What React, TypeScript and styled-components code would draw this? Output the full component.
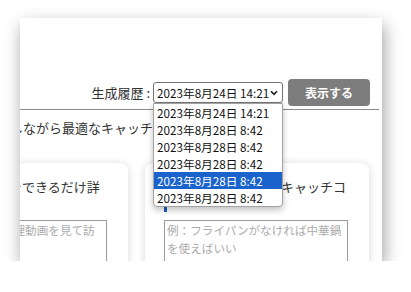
import React from 'react'
import styled, { createGlobalStyle } from 'styled-components'

const GlobalStyle = createGlobalStyle`
  body {
    margin: 0;
    background: #ffffff;
    font-family: "Noto Sans CJK JP", "Noto Sans", sans-serif;
    color: #333333;
  }
`

const Stage = styled.div`
  padding: 18px 0 0 20px;
`

const Panel = styled.div`
  width: 362px;
  height: 243px;
  overflow: hidden;
  background: #ffffff;
  box-shadow: 2px 7px 16px rgba(0, 0, 0, 0.38);
`

const Header = styled.div`
  padding-top: 61px;
`

const Toolbar = styled.div`
  display: flex;
  justify-content: flex-end;
  align-items: center;
  height: 27px;
  padding-right: 12px;
`

const Label = styled.span`
  font-size: 13px;
  color: #333333;
  margin-right: 3px;
  white-space: nowrap;
`

const SelectWrap = styled.div`
  position: relative;
`

const SelectBox = styled.div`
  box-sizing: border-box;
  width: 130px;
  height: 21px;
  border: 1px solid #767676;
  border-radius: 3px;
  display: flex;
  align-items: center;
  justify-content: space-between;
  padding: 0 4px 0 3px;
  font-size: 11.7px;
  color: #111111;
  white-space: nowrap;
`

const Dropdown = styled.ul`
  position: absolute;
  top: 100%;
  left: 0;
  z-index: 10;
  box-sizing: border-box;
  width: 130px;
  margin: 0;
  padding: 0;
  list-style: none;
  background: #ffffff;
  border: 1px solid #a3a3a3;
  border-radius: 0 0 4px 4px;
  box-shadow: 0 3px 6px rgba(0, 0, 0, 0.25);
  overflow: hidden;
`

const Option = styled.li<{ $selected?: boolean }>`
  height: 17px;
  line-height: 17px;
  padding-left: 3px;
  font-size: 11.7px;
  white-space: nowrap;
  color: ${(p) => (p.$selected ? '#ffffff' : '#111111')};
  background: ${(p) => (p.$selected ? '#1a62cc' : 'transparent')};
`

const ShowButton = styled.button`
  margin-left: 5px;
  width: 82px;
  height: 27px;
  border: none;
  border-radius: 4px;
  background: #7d7d7d;
  color: #ffffff;
  font-family: inherit;
  font-size: 12px;
  font-weight: 700;
`

const Divider = styled.div`
  margin: 3px 3px 0 0;
  border-top: 1.5px solid #8a8a8a;
`

const Intro = styled.p`
  margin: 9px 0 0 -88px;
  font-size: 13px;
  line-height: 18px;
  white-space: nowrap;
  color: #333333;
`

const CardRow = styled.div`
  display: flex;
  gap: 17px;
  margin: 26px 0 0 -121px;
`

const Card = styled.section<{ $width: number }>`
  box-sizing: border-box;
  flex-shrink: 0;
  width: ${(p) => p.$width}px;
  height: 200px;
  padding: 15px 21px 0 19px;
  background: #ffffff;
  border-radius: 8px;
  box-shadow: 0 1px 8px rgba(0, 0, 0, 0.16);
`

const CardTitle = styled.h3`
  margin: 0;
  width: 182px;
  font-size: 13px;
  font-weight: 400;
  line-height: 18px;
  white-space: nowrap;
  overflow: hidden;
  color: #333333;
`

const Marker = styled.div`
  width: 3px;
  height: 14px;
  margin: 2px 0 8px;
  background: #1c5fb8;
`

const Answer = styled.textarea`
  display: block;
  box-sizing: border-box;
  width: 100%;
  height: 60px;
  margin: 0;
  padding: 0 2px;
  border: 1px solid #9a9a9a;
  border-radius: 0;
  resize: none;
  font-family: inherit;
  font-size: 11.6px;
  line-height: 18px;
  &::placeholder {
    color: #ababab;
  }
`

const history = [
  '2023年8月24日 14:21',
  '2023年8月28日 8:42',
  '2023年8月28日 8:42',
  '2023年8月28日 8:42',
  '2023年8月28日 8:42',
  '2023年8月28日 8:42',
]

const Chevron = () => (
  <svg width="8" height="6" viewBox="0 0 8 6">
    <path d="M1 1.2 L4 4.4 L7 1.2" fill="none" stroke="#222" strokeWidth="1.6" />
  </svg>
)

export default function App() {
  return (
    <>
      <GlobalStyle />
      <Stage>
        <Panel>
          <Header>
            <Toolbar>
              <Label>生成履歴 :</Label>
              <SelectWrap>
                <SelectBox>
                  <span>{history[0]}</span>
                  <Chevron />
                </SelectBox>
                <Dropdown>
                  {history.map((item, index) => (
                    <Option key={index} $selected={index === 4}>
                      {item}
                    </Option>
                  ))}
                </Dropdown>
              </SelectWrap>
              <ShowButton>表示する</ShowButton>
            </Toolbar>
            <Divider />
          </Header>
          <Intro>対話を繰り返しながら最適なキャッチコピーを作ろう</Intro>
          <CardRow>
            <Card $width={229}>
              <CardTitle>お店のこだわりをできるだけ詳しく</CardTitle>
              <Marker />
              <Answer placeholder="例：ユーザーが料理動画を見て訪れる" />
            </Card>
            <Card $width={224}>
              <CardTitle>商品の魅力が伝わるキャッチコピー</CardTitle>
              <Marker />
              <Answer placeholder="例：フライパンがなければ中華鍋を使えばいい" />
            </Card>
          </CardRow>
        </Panel>
      </Stage>
    </>
  )
}
